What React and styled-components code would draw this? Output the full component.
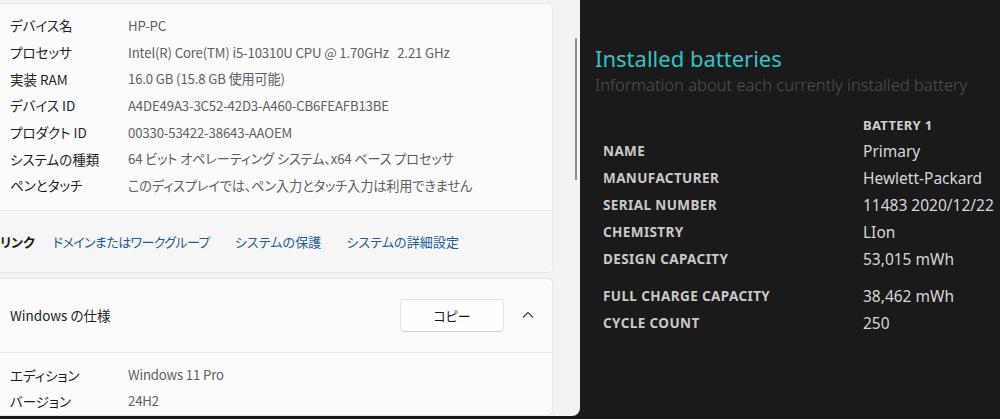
import React from "react";
import styled, { createGlobalStyle } from "styled-components";

const Global = createGlobalStyle`
  html, body { margin: 0; padding: 0; background: #1a1a1a; }
  body { width: 1000px; height: 419px; overflow: hidden; }
  #root { width: 1000px; height: 419px; }
`;

const Page = styled.div`
  display: flex;
  width: 1000px;
  height: 419px;
  background: #1a1a1a;
`;

const SettingsWindow = styled.div`
  width: 580px;
  height: 416px;
  flex: none;
  background: #f3f3f3;
  border-bottom-right-radius: 8px;
  display: flex;
  overflow: hidden;
  font-family: "Noto Sans CJK JP", "Noto Sans", sans-serif;
  font-feature-settings: "palt";
  font-size: 13px;
  color: #1b1b1b;
`;

const Content = styled.div`
  width: 553px;
  flex: none;
  display: flex;
  flex-direction: column;
  gap: 5px;
  padding-top: 3px;
  box-sizing: border-box;
`;

const Card = styled.div`
  background: #fbfbfb;
  border: 1px solid #e6e6e6;
  border-left: none;
  border-radius: 0 5px 5px 0;
  display: flex;
  flex-direction: column;
  flex: ${(p) => (p.$grow ? "1" : "none")};
`;

const SpecList = styled.div`
  display: flex;
  flex-direction: column;
  padding: ${(p) => p.$pad || "8px 0 11px"};
`;

const SpecRow = styled.div`
  display: grid;
  grid-template-columns: 118px 1fr;
  padding-left: 10px;
  height: ${(p) => p.$h || 26.7}px;
  align-items: center;
  white-space: nowrap;
`;

const SpecLabel = styled.span`
  color: #1f1f1f;
  font-size: 13.5px;
`;

const SpecValue = styled.span`
  color: #606060;
  font-size: 13.2px;
  letter-spacing: -0.15px;
`;

const LinkBar = styled.div`
  display: flex;
  align-items: center;
  height: 61px;
  background: #f6f6f6;
  border-top: 1px solid #e8e8e8;
  border-radius: 0 0 5px 0;
  gap: 25px;
  white-space: nowrap;
`;

const LinkTitle = styled.span`
  font-weight: 700;
  color: #1b1b1b;
  margin-left: 0;
  margin-right: -7px;
`;

const Link = styled.a`
  color: #245b8e;
  text-decoration: none;
  cursor: pointer;
  font-size: 13px;
  letter-spacing: ${(p) => (p.$tight ? "-0.6px" : "0.1px")};
`;

const SectionHeader = styled.div`
  display: flex;
  align-items: center;
  height: 73px;
  padding-left: 10px;
  border-bottom: 1px solid #e8e8e8;
`;

const SectionTitle = styled.span`
  flex: 1;
  color: #1b1b1b;
  font-size: 13.5px;
`;

const CopyButton = styled.button`
  width: 104px;
  height: 33px;
  background: #fefefe;
  border: 1px solid #e4e4e4;
  border-bottom-color: #cfcfcf;
  border-radius: 4px;
  font-family: inherit;
  font-feature-settings: "palt";
  font-size: 13px;
  color: #1b1b1b;
  padding: 0;
`;

const Chevron = styled.span`
  width: 48px;
  display: flex;
  justify-content: center;
  align-items: center;
`;

const ScrollTrack = styled.div`
  flex: 1;
  display: flex;
  justify-content: flex-end;
  padding: 38px 3px 0 0;
`;

const Thumb = styled.div`
  width: 2px;
  height: 142px;
  border-radius: 1px;
  background: #8d8d8d;
`;

const BatteryPanel = styled.div`
  flex: 1;
  display: flex;
  flex-direction: column;
  padding: 43px 0 0 15px;
  font-family: "Noto Sans", "Open Sans", sans-serif;
  color: #d6d6d6;
`;

const Heading = styled.h2`
  margin: 0;
  font-size: 22px;
  font-weight: 400;
  color: #34c3c6;
  line-height: 30px;
`;

const SubHeading = styled.p`
  margin: 0;
  font-size: 16.5px;
  font-weight: 300;
  color: #525252;
  line-height: 24px;
  white-space: nowrap;
`;

const Table = styled.div`
  display: grid;
  grid-template-columns: 260px 1fr;
  padding: 15px 0 0 8px;
`;

const Cell = styled.div`
  height: 27px;
  display: flex;
  align-items: center;
  white-space: nowrap;
  margin-top: ${(p) => (p.$gap ? "10px" : "0")};
`;

const ColHead = styled(Cell)`
  font-size: 13px;
  font-weight: 700;
  color: #cfcfcf;
  letter-spacing: 0.3px;
  height: 25px;
`;

const RowLabel = styled(Cell)`
  font-size: 13.5px;
  font-weight: 700;
  color: #c9c9c9;
  letter-spacing: 0.4px;
`;

const RowValue = styled(Cell)`
  font-size: 15.5px;
  color: #d6d6d6;
`;

const specs = [
  ["デバイス名", "HP-PC"],
  ["プロセッサ", "Intel(R) Core(TM) i5-10310U CPU @ 1.70GHz\u00a0\u00a0\u00a02.21 GHz"],
  ["実装 RAM", "16.0 GB (15.8 GB 使用可能)"],
  ["デバイス ID", "A4DE49A3-3C52-42D3-A460-CB6FEAFB13BE"],
  ["プロダクト ID", "00330-53422-38643-AAOEM"],
  ["システムの種類", "64 ビット オペレーティング システム、x64 ベース プロセッサ"],
  ["ペンとタッチ", "このディスプレイでは、ペン入力とタッチ入力は利用できません"],
];

const battery = [
  ["NAME", "Primary"],
  ["MANUFACTURER", "Hewlett-Packard"],
  ["SERIAL NUMBER", "11483 2020/12/22"],
  ["CHEMISTRY", "LIon"],
  ["DESIGN CAPACITY", "53,015 mWh"],
  ["FULL CHARGE CAPACITY", "38,462 mWh", true],
  ["CYCLE COUNT", "250"],
];

export default function App() {
  return (
    <>
      <Global />
      <Page>
        <SettingsWindow>
          <Content>
            <Card>
              <SpecList>
                {specs.map(([l, v]) => (
                  <SpecRow key={l}>
                    <SpecLabel>{l}</SpecLabel>
                    <SpecValue>{v}</SpecValue>
                  </SpecRow>
                ))}
              </SpecList>
              <LinkBar>
                <LinkTitle>リンク</LinkTitle>
                <Link $tight>ドメインまたはワークグループ</Link>
                <Link>システムの保護</Link>
                <Link>システムの詳細設定</Link>
              </LinkBar>
            </Card>
            <Card $grow>
              <SectionHeader>
                <SectionTitle>Windows の仕様</SectionTitle>
                <CopyButton>コピー</CopyButton>
                <Chevron>
                  <svg width="12" height="8" viewBox="0 0 12 8" fill="none">
                    <path d="M1 6.5 L6 1.5 L11 6.5" stroke="#3a3a3a" strokeWidth="1.1" />
                  </svg>
                </Chevron>
              </SectionHeader>
              <SpecList $pad="9px 0 0">
                <SpecRow $h={26}>
                  <SpecLabel>エディション</SpecLabel>
                  <SpecValue>Windows 11 Pro</SpecValue>
                </SpecRow>
                <SpecRow $h={26}>
                  <SpecLabel>バージョン</SpecLabel>
                  <SpecValue>24H2</SpecValue>
                </SpecRow>
              </SpecList>
            </Card>
          </Content>
          <ScrollTrack>
            <Thumb />
          </ScrollTrack>
        </SettingsWindow>
        <BatteryPanel>
          <Heading>Installed batteries</Heading>
          <SubHeading>Information about each currently installed battery</SubHeading>
          <Table>
            <span />
            <ColHead>BATTERY 1</ColHead>
            {battery.map(([l, v, gap]) => (
              <React.Fragment key={l}>
                <RowLabel $gap={gap}>{l}</RowLabel>
                <RowValue $gap={gap}>{v}</RowValue>
              </React.Fragment>
            ))}
          </Table>
        </BatteryPanel>
      </Page>
    </>
  );
}
